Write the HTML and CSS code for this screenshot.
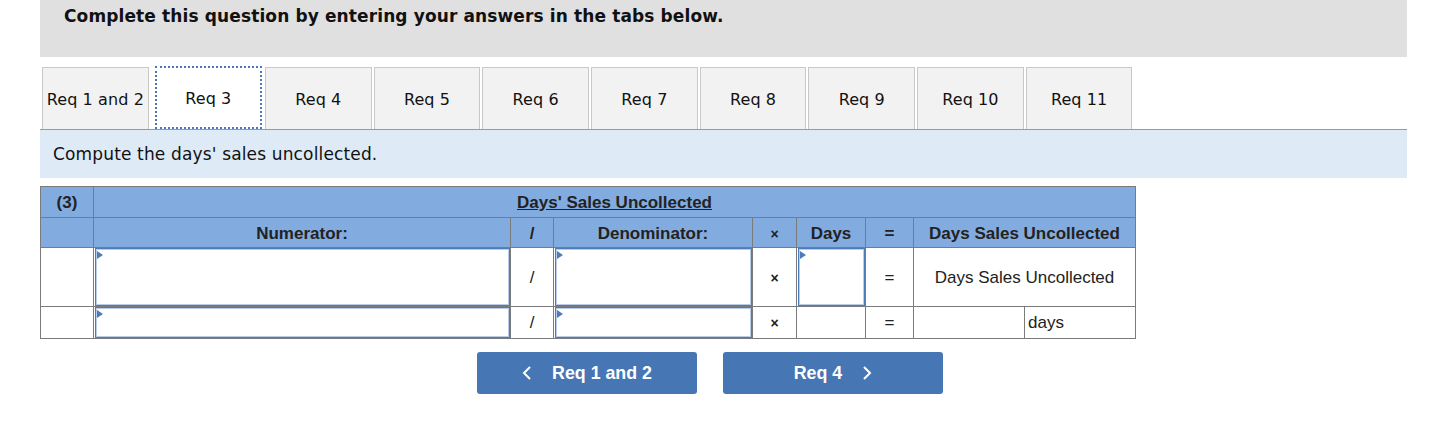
FILE: index.html
```html
<!DOCTYPE html>
<html>
<head>
<meta charset="utf-8">
<link rel="stylesheet" href="styles.css">
</head>
<body>
<div class="wrap">
  <div class="banner">Complete this question by entering your answers in the tabs below.</div>

  <div class="tabs">
    <div class="tab first">Req 1 and 2</div>
    <div class="tab active">Req 3</div>
    <div class="tab">Req 4</div>
    <div class="tab">Req 5</div>
    <div class="tab">Req 6</div>
    <div class="tab">Req 7</div>
    <div class="tab">Req 8</div>
    <div class="tab">Req 9</div>
    <div class="tab">Req 10</div>
    <div class="tab">Req 11</div>
  </div>

  <div class="prompt">Compute the days' sales uncollected.</div>

  <table class="grid">
    <colgroup>
      <col class="c-label">
      <col class="c-num">
      <col class="c-op">
      <col class="c-den">
      <col class="c-op2">
      <col class="c-days">
      <col class="c-eq">
      <col class="c-res1">
      <col class="c-res2">
    </colgroup>
    <tr class="h1">
      <th class="lbl">(3)</th>
      <th colspan="8"><span class="u">Days' Sales Uncollected</span></th>
    </tr>
    <tr class="h2">
      <th></th>
      <th>Numerator:</th>
      <th>/</th>
      <th>Denominator:</th>
      <th class="x">×</th>
      <th>Days</th>
      <th>=</th>
      <th colspan="2">Days Sales Uncollected</th>
    </tr>
    <tr class="r1">
      <td></td>
      <td class="in"><div class="field"><span class="tri"></span></div></td>
      <td>/</td>
      <td class="in"><div class="field"><span class="tri"></span></div></td>
      <td class="x">×</td>
      <td class="in"><div class="field"><span class="tri"></span></div></td>
      <td>=</td>
      <td colspan="2">Days Sales Uncollected</td>
    </tr>
    <tr class="r2">
      <td></td>
      <td class="in"><div class="field"><span class="tri"></span></div></td>
      <td>/</td>
      <td class="in"><div class="field"><span class="tri"></span></div></td>
      <td class="x">×</td>
      <td></td>
      <td>=</td>
      <td></td>
      <td class="left">days</td>
    </tr>
  </table>

  <div class="nav">
    <div class="btn">
      <svg class="chev" width="10" height="16" viewBox="0 0 10 16"><polyline points="8,2 2,8 8,14" fill="none" stroke="#fff" stroke-width="2"/></svg>
      <span class="btxt">Req 1 and 2</span>
    </div>
    <div class="btn">
      <span class="btxt">Req 4</span>
      <svg class="chev" width="10" height="16" viewBox="0 0 10 16"><polyline points="2,2 8,8 2,14" fill="none" stroke="#fff" stroke-width="2"/></svg>
    </div>
  </div>
</div>
</body>
</html>
```

FILE: styles.css
```css
html, body {
  margin: 0;
  padding: 0;
  background: #fff;
}
.wrap {
  margin-left: 40px;
  width: 1367px;
  font-family: "DejaVu Sans", Verdana, sans-serif;
  color: #111;
}
.banner {
  background: #e0e0e0;
  height: 57px;
  box-sizing: border-box;
  padding: 5px 0 0 24px;
  font-weight: bold;
  font-size: 17px;
  letter-spacing: 0.12px;
  line-height: 22px;
}
.tabs {
  display: flex;
  gap: 2px;
  margin-top: 10px;
  padding-left: 2px;
  border-bottom: 1px solid #9a9a9a;
  height: 62px;
}
.tab {
  width: 106.7px;
  flex: none;
  box-sizing: border-box;
  height: 62px;
  padding-top: 2px;
  background: #f2f2f2;
  border: 1px solid #c8c8c8;
  border-bottom: none;
  font-size: 16px;
  letter-spacing: 0.1px;
  display: flex;
  align-items: center;
  justify-content: center;
  color: #111;
}
.tab.first {
  margin-right: 4.3px;
}
.tab.active {
  background: #fff;
  border: 2px dotted #4a78b8;
  height: 63px;
  margin-top: -1px;
  margin-right: 1.3px;
}
.prompt {
  background: #deeaf6;
  height: 48px;
  box-sizing: border-box;
  padding-left: 13px;
  display: flex;
  align-items: center;
  font-size: 17px;
  letter-spacing: 0.15px;
  color: #111;
}
.grid {
  margin-top: 8px;
  border-collapse: collapse;
  table-layout: fixed;
  width: 1095px;
  font-family: "Liberation Sans", Arial, sans-serif;
  font-size: 17px;
  color: #222;
}
.c-label { width: 53px; }
.c-num { width: 417px; }
.c-op { width: 43px; }
.c-den { width: 199px; }
.c-op2 { width: 44px; }
.c-days { width: 69px; }
.c-eq { width: 48px; }
.c-res1 { width: 111px; }
.c-res2 { width: 111px; }
.grid th, .grid td {
  border: 1px solid #7b7b7b;
  padding: 0;
  text-align: center;
}
.grid th {
  background: #82abdf;
  font-weight: bold;
  color: #222;
  padding-top: 2px;
}
.h1 th { height: 28px; }
.h2 th { height: 27px; }
.r1 td { height: 57px; padding-top: 1px; }
.r2 td { height: 31px; }
.grid td.in { padding: 0; }
.u { text-decoration: underline; }
.x { font-size: 14px; font-weight: bold; }
.grid td.x { font-weight: bold; }
.grid td.left { text-align: left; padding-left: 3px; }
.field {
  position: relative;
  box-sizing: border-box;
  border: 1px solid #4d7cb9;
  box-shadow: inset 0 0 0 1px #b9cdea;
  background: #fff;
  margin: 0 0 0 1px;
}
.r1 .field { height: 58px; }
.r2 .field { height: 31px; }
.tri {
  position: absolute;
  left: 1px;
  top: 2px;
  width: 0;
  height: 0;
  border-top: 4px solid transparent;
  border-bottom: 4px solid transparent;
  border-left: 6px solid #4d7cb9;
}
.nav {
  display: flex;
  gap: 26px;
  margin-top: 13px;
  margin-left: 437px;
}
.btn {
  width: 220px;
  height: 42px;
  background: #4776b4;
  border-radius: 3px;
  display: flex;
  align-items: center;
  justify-content: center;
  gap: 20px;
  color: #fff;
  font-family: "Liberation Sans", Arial, sans-serif;
  font-weight: bold;
  font-size: 17.8px;
}
.chev { display: block; }
```
